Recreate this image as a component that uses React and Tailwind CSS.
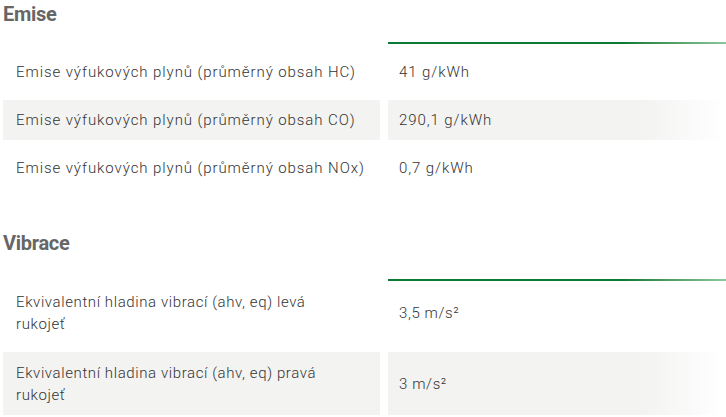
const sections = [
  {
    title: 'Emise',
    lineGap: 'mt-[14px]',
    rowsGap: 'mt-2',
    rowHeight: 'h-10',
    tracking: 'tracking-[0.92px]',
    labelWidth: '',
    rows: [
      ['Emise výfukových plynů (průměrný obsah HC)', '41 g/kWh'],
      ['Emise výfukových plynů (průměrný obsah CO)', '290,1 g/kWh'],
      ['Emise výfukových plynů (průměrný obsah NOx)', '0,7 g/kWh'],
    ],
  },
  {
    title: 'Vibrace',
    lineGap: 'mt-[22px]',
    rowsGap: 'mt-0',
    rowHeight: 'h-[63px]',
    tracking: 'tracking-[0.6px]',
    labelWidth: 'max-w-[320px]',
    rows: [
      ['Ekvivalentní hladina vibrací (ahv, eq) levá rukojeť', '3,5 m/s²'],
      ['Ekvivalentní hladina vibrací (ahv, eq) pravá rukojeť', '3 m/s²'],
    ],
  },
]

function Section({ section, className }) {
  const text = `text-[15px] leading-[22px] font-light text-[#333333] ${section.tracking}`
  return (
    <section className={className}>
      <h2 className="h-7 text-[20px] leading-7 font-bold text-[#666666] tracking-[-0.3px]">{section.title}</h2>
      <div className={`flex ${section.lineGap}`}>
        <div className="w-[385px] shrink-0" />
        <div className="h-[2px] flex-1 bg-gradient-to-r from-[#0b7a35] from-70% to-[#8cc79d]" />
      </div>
      <div className={`flex flex-col gap-2 ${section.rowsGap}`}>
        {section.rows.map(([label, value], i) => {
          const odd = i % 2 === 1
          return (
            <div key={label} className={`flex gap-2 ${section.rowHeight}`}>
              <div className={`w-[377px] shrink-0 flex items-center pl-[13px] pr-3 ${odd ? 'bg-[#f3f3f2]' : ''}`}>
                <span className={`${text} ${section.labelWidth}`}>{label}</span>
              </div>
              <div className={`flex-1 flex items-center pl-[11px] ${odd ? 'bg-gradient-to-r from-[#f3f3f2] from-75% to-white' : ''}`}>
                <span className={text}>{value}</span>
              </div>
            </div>
          )
        })}
      </div>
    </section>
  )
}

export default function App() {
  return (
    <div className="w-[726px] h-[417px] overflow-hidden bg-white pl-[3px] font-['Roboto',sans-serif]">
      <Section section={sections[0]} />
      <Section section={sections[1]} className="mt-[41px]" />
    </div>
  )
}
